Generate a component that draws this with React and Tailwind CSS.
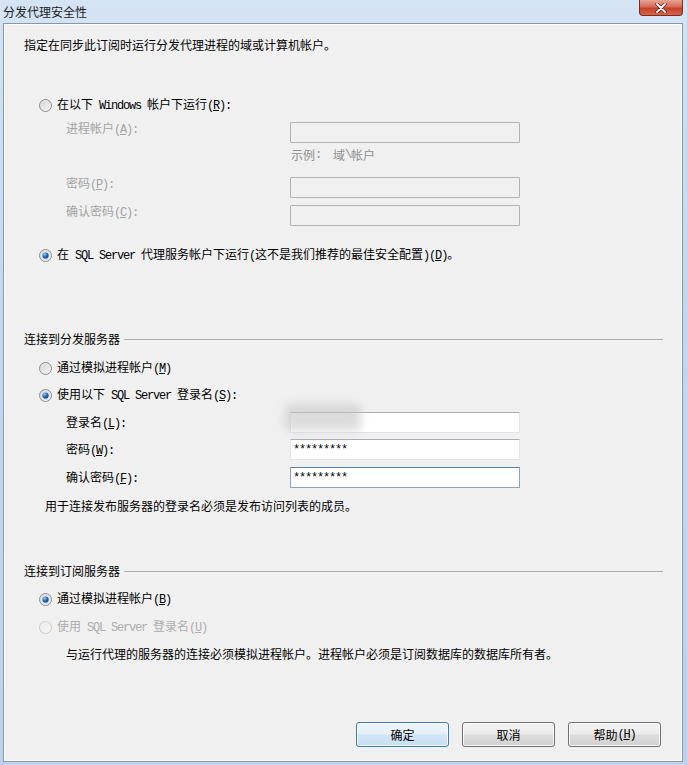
import React from "react";

// ASCII runs in the reference are half-width (6px) like SimSun's Latin glyphs
const M = ({ children }) => (
  <span className="font-['Liberation_Mono',monospace] text-[12px] tracking-[-1.2px]">{children}</span>
);

const Key = ({ k, tail = "" }) => (
  <M>
    (<span className="underline">{k}</span>){tail}
  </M>
);

function Radio({ checked, disabled }) {
  return (
    <svg width="13" height="13" viewBox="0 0 13 13" className="shrink-0">
      <defs>
        <linearGradient id="rfill" x1="0" y1="0" x2="1" y2="1">
          <stop offset="0%" stopColor="#d0d0d0" />
          <stop offset="100%" stopColor="#fafafa" />
        </linearGradient>
        <linearGradient id="rfillD" x1="0" y1="0" x2="1" y2="1">
          <stop offset="0%" stopColor="#e6e6e6" />
          <stop offset="100%" stopColor="#fbfbfb" />
        </linearGradient>
        <radialGradient id="rdot" cx="0.35" cy="0.3" r="0.8">
          <stop offset="0%" stopColor="#8fcaf2" />
          <stop offset="55%" stopColor="#2a64a8" />
          <stop offset="100%" stopColor="#0f3a78" />
        </radialGradient>
      </defs>
      <circle cx="6.5" cy="6.5" r="6" fill={disabled ? "url(#rfillD)" : "url(#rfill)"} stroke={disabled ? "#c8c8c8" : "#8c8c8c"} />
      <circle cx="6.5" cy="6.5" r="4.6" fill="none" stroke={disabled ? "#f2f2f2" : "#e8e8e8"} strokeWidth="0.8" />
      {checked && (
        <>
          <circle cx="6.5" cy="6.5" r="4.3" fill="#cde2f4" />
          <circle cx="6.5" cy="6.5" r="3.1" fill="url(#rdot)" />
        </>
      )}
    </svg>
  );
}

const disabledBox = "h-[21px] w-[230px] border border-[#b3b3b3] bg-[#f0f0f0] rounded-[1px]";
const enabledBox = "h-[21px] w-[230px] border border-[#e1e5ea] border-t-[#abadb3] bg-white rounded-[1px]";
const focusBox = "h-[21px] w-[230px] border border-[#8aa5c2] border-t-[#5b7fa3] bg-white rounded-[1px]";

function GroupHeader({ title }) {
  return (
    <div className="flex items-center h-[20px] pl-[20px] pr-[19px]">
      <span>{title}</span>
      <div className="ml-[4px] flex-1 border-t border-[#acacac]" />
    </div>
  );
}

function Btn({ children, primary }) {
  return (
    <div
      className={
        "w-[93px] h-[25px] rounded-[3px] border flex items-center justify-center shadow-[inset_0_0_0_1px_rgba(255,255,255,0.8)] " +
        (primary
          ? "border-[#3c7fb1] bg-[linear-gradient(180deg,#eef6fc_0%,#e3eff9_48%,#d3e6f6_52%,#c6def2_100%)]"
          : "border-[#707070] bg-[linear-gradient(180deg,#f3f3f3_0%,#ebebeb_48%,#dddddd_52%,#d0d0d0_100%)]")
      }
    >
      {children}
    </div>
  );
}

export default function App() {
  return (
    <div className="relative w-[687px] h-[765px] overflow-hidden bg-[linear-gradient(180deg,#d4e4f5_0%,#c3d7ee_40%,#bed3eb_100%)] font-['Noto_Sans_CJK_SC',sans-serif] text-[12px] text-black">
      {/* title bar */}
      <div className="h-[23px] flex items-center pl-[3px] text-[12px] text-[#1a1a1a]">分发代理安全性</div>

      {/* close button */}
      <div className="absolute left-[639px] top-0 w-[44px] h-[16px] rounded-b-[4px] border border-t-0 border-[#7b2c21] bg-[linear-gradient(180deg,#e7a595_0%,#d66a55_45%,#c7412a_55%,#d5644b_100%)] flex items-center justify-center">
        <svg width="12" height="10" viewBox="0 0 12 10">
          <path d="M2 1 L10 9 M10 1 L2 9" stroke="#5a1a12" strokeWidth="3.2" strokeLinecap="round" />
          <path d="M2 1 L10 9 M10 1 L2 9" stroke="#ffffff" strokeWidth="1.8" strokeLinecap="round" />
        </svg>
      </div>

      {/* client area */}
      <div className="ml-[3px] w-[680px] h-[739px] border border-[#8796ab] bg-[#f0f0f0] shadow-[inset_0_0_0_1px_#ffffff]">
        <div className="mt-[11px] h-[20px] flex items-center pl-[20px]">指定在同步此订阅时运行分发代理进程的域或计算机帐户。</div>

        <div className="mt-[40px] h-[20px] flex items-center pl-[35px] gap-[5px]">
          <Radio />
          <span>
            在以下<M> Windows </M>帐户下运行<Key k="R" tail=":" />
          </span>
        </div>

        <div className="mt-[7px] flex items-start pl-[62px]">
          <span className="w-[224px] leading-[12px] text-[#a3a3a3]">
            进程帐户<Key k="A" tail=":" />
          </span>
          <div className={disabledBox} />
        </div>

        <div className="mt-[5px] h-[14px] flex items-center pl-[287px] text-[#8f8f8f]">
          示例<M>:&nbsp;&nbsp;</M>域<M>\</M>帐户
        </div>

        <div className="mt-[15px] flex items-start pl-[62px]">
          <span className="w-[224px] leading-[12px] text-[#a3a3a3]">
            密码<Key k="P" tail=":" />
          </span>
          <div className={disabledBox} />
        </div>

        <div className="mt-[7px] flex items-start pl-[62px]">
          <span className="w-[224px] leading-[12px] text-[#a3a3a3]">
            确认密码<Key k="C" tail=":" />
          </span>
          <div className={disabledBox} />
        </div>

        <div className="mt-[19px] h-[20px] flex items-center pl-[35px] gap-[5px]">
          <Radio checked />
          <span>
            在<M> SQL Server </M>代理服务帐户下运行<M>(</M>这不是我们推荐的最佳安全配置<M>)</M>
            <Key k="D" />。
          </span>
        </div>

        <div className="mt-[64px]">
          <GroupHeader title="连接到分发服务器" />
        </div>

        <div className="mt-[9px] h-[20px] flex items-center pl-[35px] gap-[5px]">
          <Radio />
          <span>
            通过模拟进程帐户<Key k="M" />
          </span>
        </div>

        <div className="mt-[7px] h-[20px] flex items-center pl-[35px] gap-[5px]">
          <Radio checked />
          <span>
            使用以下<M> SQL Server </M>登录名<Key k="S" tail=":" />
          </span>
        </div>

        <div className="mt-[7px] flex items-center pl-[62px]">
          <span className="w-[224px]">
            登录名<Key k="L" tail=":" />
          </span>
          <div className={"relative " + enabledBox}>
            <div className="absolute -left-[6px] -top-[9px] w-[76px] h-[27px] rounded-[6px] bg-[#c4c4c4] opacity-60 blur-[5px]" />
          </div>
        </div>

        <div className="mt-[6px] flex items-center pl-[62px]">
          <span className="w-[224px]">
            密码<Key k="W" tail=":" />
          </span>
          <div className={enabledBox + " flex items-center pl-[2px]"}>
            <M>*********</M>
          </div>
        </div>

        <div className="mt-[7px] flex items-center pl-[62px]">
          <span className="w-[224px]">
            确认密码<Key k="F" tail=":" />
          </span>
          <div className={focusBox + " flex items-center pl-[2px]"}>
            <M>*********</M>
          </div>
        </div>

        <div className="mt-[8px] h-[20px] flex items-center pl-[41px]">用于连接发布服务器的登录名必须是发布访问列表的成员。</div>

        <div className="mt-[45px]">
          <GroupHeader title="连接到订阅服务器" />
        </div>

        <div className="mt-[8px] h-[20px] flex items-center pl-[35px] gap-[5px]">
          <Radio checked />
          <span>
            通过模拟进程帐户<Key k="B" />
          </span>
        </div>

        <div className="mt-[8px] h-[20px] flex items-center pl-[35px] gap-[5px] text-[#adadad]">
          <Radio disabled />
          <span>
            使用<M> SQL Server </M>登录名<Key k="U" />
          </span>
        </div>

        <div className="mt-[7px] h-[20px] flex items-center pl-[62px]">
          与运行代理的服务器的连接必须模拟进程帐户。进程帐户必须是订阅数据库的数据库所有者。
        </div>

        <div className="mt-[58px] flex justify-end gap-[13px] pr-[21px]">
          <Btn primary>确定</Btn>
          <Btn>取消</Btn>
          <Btn>
            帮助<Key k="H" />
          </Btn>
        </div>
      </div>
    </div>
  );
}
